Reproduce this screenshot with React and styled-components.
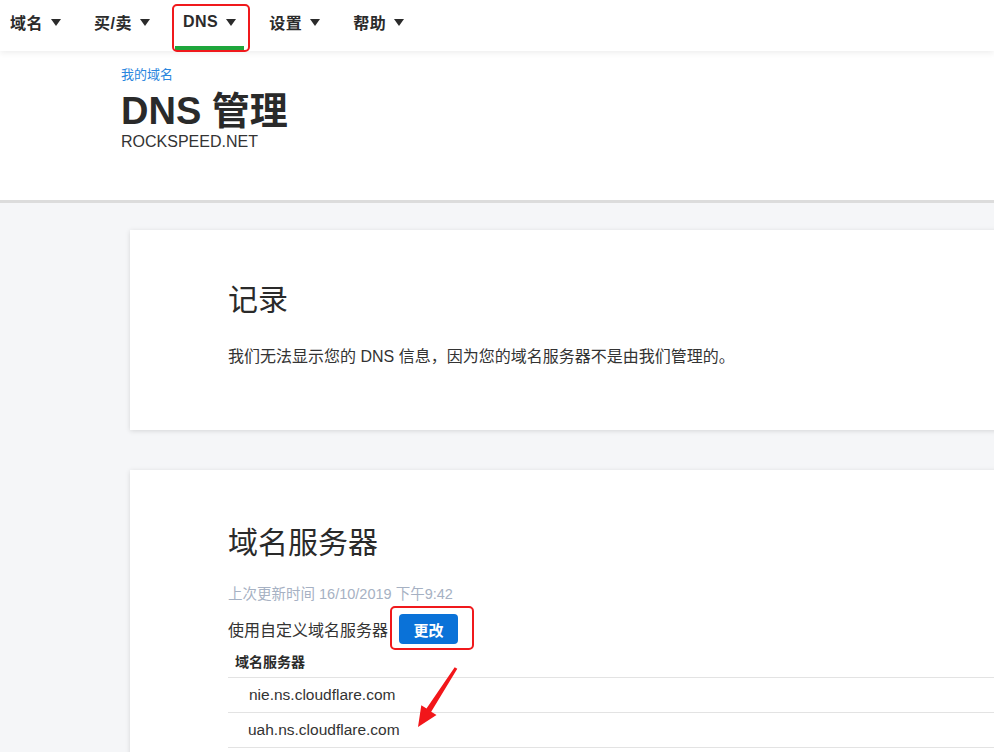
import React from "react";
import styled, { createGlobalStyle } from "styled-components";

const Global = createGlobalStyle`
  html, body { margin: 0; padding: 0; }
  body {
    background: #f5f6f8;
    font-family: "Liberation Sans", "Noto Sans CJK SC", sans-serif;
    color: #333;
    overflow: hidden;
    width: 994px;
    height: 752px;
  }
`;

const Page = styled.div`
  width: 994px;
  min-height: 752px;
  overflow: hidden;
`;

const Nav = styled.nav`
  position: relative;
  z-index: 2;
  display: flex;
  gap: 17px;
  height: 51px;
  padding-left: 2px;
  background: #fff;
  box-shadow: 0 2px 6px rgba(0, 0, 0, 0.07);
`;

const NavItem = styled.div`
  position: relative;
  display: flex;
  align-items: center;
  box-sizing: border-box;
  height: 50px;
  padding: 0 8px 2px;
  border-bottom: 4px solid ${(p) => (p.$active ? "#1ea63b" : "transparent")};
  font-size: 16px;
  font-weight: 700;
  letter-spacing: 0.5px;
  color: #2b2b2b;
  white-space: nowrap;
`;

const Caret = styled.span`
  display: inline-block;
  width: 0;
  height: 0;
  margin-left: 8px;
  border-left: 5px solid transparent;
  border-right: 5px solid transparent;
  border-top: 7px solid #2b2b2b;
`;

const RedBox = styled.span`
  position: absolute;
  left: ${(p) => p.$l}px;
  right: ${(p) => p.$r}px;
  top: ${(p) => p.$t}px;
  bottom: ${(p) => p.$b}px;
  border: 2px solid #f0191c;
  border-radius: 5px;
  pointer-events: none;
`;

const Header = styled.header`
  background: #fff;
  padding: 15px 0 48px 121px;
  border-bottom: 3px solid #dcdcdc;
`;

const Crumb = styled.div`
  font-size: 13px;
  line-height: 18px;
  color: #2a86de;
`;

const Title = styled.h1`
  margin: 5px 0 0;
  font-size: 38px;
  line-height: 44px;
  font-weight: 700;
  color: #2a2a2a;
`;

const Domain = styled.div`
  margin-top: -1px;
  font-size: 16px;
  line-height: 20px;
  color: #333;
`;

const Main = styled.main`
  display: flex;
  flex-direction: column;
  gap: 40px;
  padding: 27px 0 0 130px;
`;

const Card = styled.section`
  position: relative;
  box-sizing: border-box;
  width: 940px;
  height: ${(p) => (p.$h ? `${p.$h}px` : "auto")};
  padding: ${(p) => p.$pt}px 0 40px 98px;
  background: #fff;
  box-shadow: 0 1px 5px rgba(0, 0, 0, 0.13);
`;

const CardTitle = styled.h2`
  margin: 0;
  font-size: 30px;
  line-height: 36px;
  font-weight: 400;
  color: #2a2a2a;
`;

const Para = styled.p`
  margin: 27px 0 0;
  font-size: 16px;
  line-height: 24px;
  color: #333;
`;

const Updated = styled.div`
  margin-top: 23px;
  font-size: 14.5px;
  line-height: 20px;
  color: #a6b1c3;
`;

const CustomRow = styled.div`
  display: flex;
  align-items: center;
  height: 30px;
  margin-top: 10px;
  font-size: 16px;
  color: #333;
`;

const ButtonWrap = styled.span`
  position: relative;
  margin-left: 11px;
  display: inline-flex;
`;

const Button = styled.button`
  width: 59px;
  height: 30px;
  border: none;
  border-radius: 4px;
  background: #0a72d8;
  color: #fff;
  font-family: inherit;
  font-size: 15px;
  font-weight: 700;
  padding: 0;
`;

const Table = styled.div`
  display: flex;
  flex-direction: column;
`;

const HeadCell = styled.div`
  display: flex;
  align-items: center;
  height: 33px;
  padding: 0 7px;
  font-size: 14px;
  font-weight: 700;
  color: #2b2b2b;
  border-bottom: 1px solid #e3e3e3;
`;

const Row = styled.div`
  display: flex;
  align-items: center;
  height: 34px;
  padding-left: ${(p) => p.$indent}px;
  font-size: 15.5px;
  color: #333;
  border-bottom: 1px solid #e3e3e3;
`;

const Arrow = styled.svg`
  position: absolute;
  left: 280px;
  top: 195px;
`;

export default function App() {
  const nav = ["域名", "买/卖", "DNS", "设置", "帮助"];
  return (
    <Page>
      <Global />
      <Nav>
        {nav.map((n) => (
          <NavItem key={n} $active={n === "DNS"}>
            {n}
            <Caret />
            {n === "DNS" && <RedBox $l={-3} $r={-6} $t={4} $b={-6} />}
          </NavItem>
        ))}
      </Nav>
      <Header>
        <Crumb>我的域名</Crumb>
        <Title>DNS 管理</Title>
        <Domain>ROCKSPEED.NET</Domain>
      </Header>
      <Main>
        <Card $h={200} $pt={52}>
          <CardTitle>记录</CardTitle>
          <Para>我们无法显示您的 DNS 信息，因为您的域名服务器不是由我们管理的。</Para>
        </Card>
        <Card $pt={55}>
          <CardTitle>域名服务器</CardTitle>
          <Updated>上次更新时间 16/10/2019 下午9:42</Updated>
          <CustomRow>
            使用自定义域名服务器
            <ButtonWrap>
              <Button>更改</Button>
              <RedBox $l={-9} $r={-16} $t={-8} $b={-6} />
            </ButtonWrap>
          </CustomRow>
          <Table>
            <HeadCell>域名服务器</HeadCell>
            <Row $indent={21}>nie.ns.cloudflare.com</Row>
            <Row $indent={20}>uah.ns.cloudflare.com</Row>
          </Table>
          <Arrow width="56" height="70" viewBox="0 0 56 70">
            <polygon
              points="47.3,3.8 21.2,46.7 26.5,50 8,62 11.3,40.3 16.5,43.6 44.7,2.2"
              fill="#f2161a"
            />
          </Arrow>
        </Card>
      </Main>
    </Page>
  );
}
